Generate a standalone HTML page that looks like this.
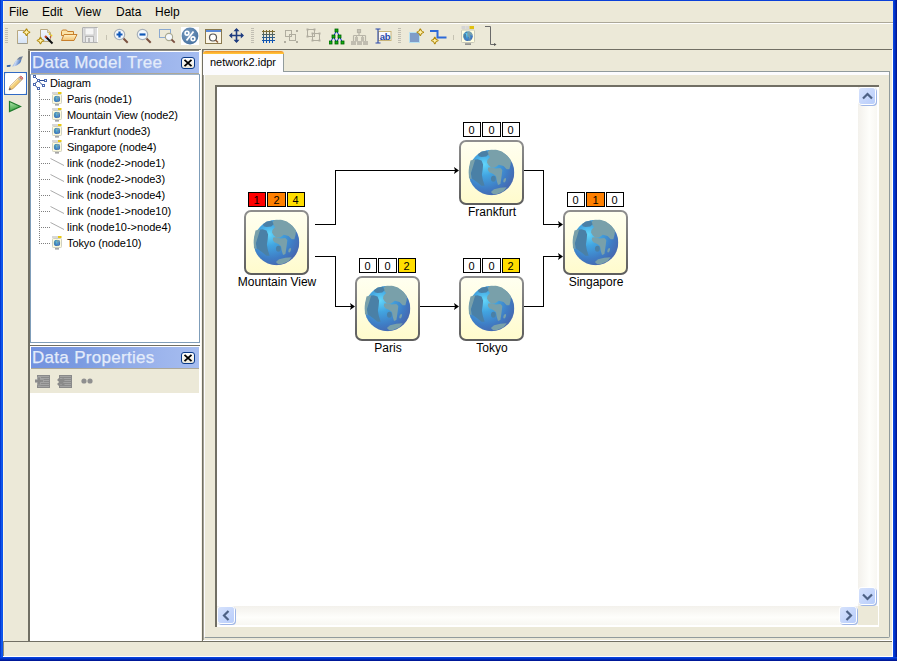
<!DOCTYPE html>
<html><head><meta charset="utf-8">
<style>
*{box-sizing:border-box;margin:0;padding:0}
html,body{width:897px;height:661px;overflow:hidden;background:#ece9d8;font-family:"Liberation Sans",sans-serif;position:relative}
.a{position:absolute}
.menu{font-size:12px;color:#000;top:5px;line-height:14px}
.title{font-size:17px;color:#e4ecfa;line-height:20px;white-space:nowrap;letter-spacing:0.3px;-webkit-text-stroke:0.25px #e4ecfa}
.tree{font-size:11px;color:#000;line-height:13px;white-space:nowrap;letter-spacing:-0.1px}
.lbl{font-size:12px;color:#000;line-height:14px;white-space:nowrap;text-align:center}
.bdg{font-size:11px;line-height:13px;padding-top:1px;padding-right:1px;text-align:center;border:1px solid #000;color:#000;background:#fff;height:15px;width:18px}
.node{width:64px;height:64px;border:2px solid #7d7d7d;border-radius:7px;background:linear-gradient(#fffff0,#fffde2 55%,#fff8cc)}
.node svg{position:absolute;left:6.5px;top:8px}
.closebtn{width:14px;height:12px;border:1px solid #0a3a88;border-radius:3px;background:linear-gradient(#fff,#ece8da)}
</style></head><body>
<svg width="0" height="0" style="position:absolute">
<defs>
<radialGradient id="gl" cx="0.36" cy="0.34" r="0.7" fx="0.34" fy="0.32">
<stop offset="0" stop-color="#62d6fa"/><stop offset="0.35" stop-color="#42a4e0"/><stop offset="0.75" stop-color="#3f7cc4"/><stop offset="1" stop-color="#4668b0"/>
</radialGradient>
<symbol id="globe" viewBox="0 0 46 46">
<circle cx="23" cy="23" r="22.8" fill="url(#gl)"/>
<path fill="#79a0aa" d="M18.9 2.8L20.9 0.4L27.1 0L33.4 2L38.9 6.3L42.5 11L42.1 14.9L40.9 19.7L38.2 19.7L35 16.5L30.3 15.3L27.9 16.9L26.4 18.1L22.4 17.7L20.1 15.7L18.5 13L18.9 10.6L21.6 7.5L20.1 5.9Z"/>
<path fill="#79a0aa" d="M19.7 18.1L23.2 17.7L27.1 18.9L31.9 18.5L33.8 20.5L33.4 24.4L32.6 29.9L31.9 34.6L29.5 35.4L28.3 31.5L27.5 26.8L24.8 24.4L20.9 22.8L19.3 20.5Z"/>
<ellipse cx="24.9" cy="29.3" rx="2.4" ry="3" fill="#4a80a6"/>
<path fill="#4a80a6" d="M5.9 10.2L9 9.8L13 11L14.6 14.9L14.2 19.7L13.4 25.2L14.2 29.9L16.1 36.2L13 36.2L9 33L3.5 29.1L2.4 24.4L3.1 18.9Z"/>
<path fill="#79a0aa" d="M2 11L6.7 9.8L4.7 16.5L2.4 23.6L3.1 29.9L0.4 28.3L0 20.5Z"/>
<path fill="#4a80a6" d="M9.4 4.7L13 2L18.5 1.2L20.1 4.7L17.7 7.1L13 7.5L10.2 6.7Z"/>
<path fill="#79a0aa" d="M22.4 42.5L25.5 39.7L31.9 38.2L38.2 37.8L35 41.7L28.7 44.5L24.8 44.8Z"/>
<ellipse cx="36.2" cy="30.7" rx="1.2" ry="2.4" transform="rotate(20 36.2 30.7)" fill="#79a0aa"/>
</symbol>
<symbol id="mini" viewBox="0 0 10 14">
<rect x="0" y="0" width="6" height="2" fill="#d8d8d8"/><rect x="6" y="0" width="3.5" height="2" fill="#e8c810"/>
<rect x="0.5" y="2.5" width="9" height="9" rx="0.8" fill="#fffbdc" stroke="#d0d0c0"/>
<use href="#globe" x="1.7" y="3.7" width="6.6" height="6.6"/>
<rect x="3" y="12.2" width="4" height="1.3" fill="#909090"/>
</symbol>
</defs>
</svg>

<!-- window border -->
<div class="a" style="left:0;top:0;width:897px;height:1px;background:#0a3fd8"></div>
<div class="a" style="left:0;top:0;width:3px;height:661px;background:linear-gradient(90deg,#0028c8,#1060f0 60%,#0a4ae8)"></div>
<div class="a" style="left:893px;top:0;width:4px;height:661px;background:linear-gradient(90deg,#0a48e8,#0030c0 50%,#00108a)"></div>
<div class="a" style="left:0;top:657px;width:897px;height:4px;background:linear-gradient(#0a48e8,#0030c0 50%,#00108a)"></div>
<div class="a" style="left:3px;top:1px;width:1px;height:656px;background:#fbf7e6"></div>

<!-- menu bar -->
<div class="a menu" style="left:9px">File</div>
<div class="a menu" style="left:42px">Edit</div>
<div class="a menu" style="left:75px">View</div>
<div class="a menu" style="left:116px">Data</div>
<div class="a menu" style="left:155px">Help</div>
<div class="a" style="left:3px;top:22px;width:890px;height:1px;background:#aca899"></div>
<div class="a" style="left:3px;top:23px;width:890px;height:1px;background:#fff"></div>

<!-- TOOLBAR -->
<div class="a" style="left:5px;top:28px;width:3px;height:16px;background:repeating-linear-gradient(#c1beb2 0 1px,transparent 1px 2px)"></div>
<!-- new -->
<svg class="a" style="left:16px;top:28px" width="16" height="17" viewBox="0 0 16 17">
<defs><linearGradient id="pgf" x1="0" y1="0" x2="0" y2="1"><stop offset="0" stop-color="#f4f7fc"/><stop offset="1" stop-color="#d6e4f6"/></linearGradient>
<path id="star" d="M0 -3.6Q0.7 -0.7 3.6 0Q0.7 0.7 0 3.6Q-0.7 0.7 -3.6 0Q-0.7 -0.7 0 -3.6Z" fill="#fff0a8" stroke="#b0880a" stroke-width="1.1"/></defs>
<path d="M1.5 2.5h7v2h3v11h-10z" fill="url(#pgf)" stroke="#b8a880"/>
<path d="M1.5 15.5h10" stroke="#9a9a90"/>
<use href="#star" x="10.5" y="4.3"/>
</svg>
<!-- wizard -->
<svg class="a" style="left:36px;top:28px" width="18" height="18" viewBox="0 0 18 18">
<path d="M4.5 1.5h7l3 3v9h-10z" fill="url(#pgf)" stroke="#b8a880"/>
<path d="M11.5 1.5v3h3" fill="#e8dcc0" stroke="#c8b888"/>
<path d="M9.5 8.5l7 7" stroke="#111" stroke-width="2"/>
<path d="M9 8l1.6 1.6" stroke="#d04020" stroke-width="2"/>
<circle cx="13.5" cy="6" r="0.9" fill="#f0d020"/><circle cx="15.5" cy="7.5" r="0.9" fill="#f0d020"/><circle cx="14.5" cy="9" r="0.8" fill="#c03020"/>
<use href="#star" x="4.5" y="12.5"/>
</svg>
<!-- open -->
<svg class="a" style="left:60px;top:29px" width="18" height="13" viewBox="0 0 18 13">
<defs><linearGradient id="fg" x1="0" y1="0" x2="0" y2="1"><stop offset="0" stop-color="#fff2c8"/><stop offset="1" stop-color="#f0c070"/></linearGradient></defs>
<path d="M1.5 2.5l1-1.5h4l1 1.5h6v4h-12z" fill="#fbe3a8" stroke="#c8802c"/>
<path d="M1.5 11.5l2.5-6h13l-3 6z" fill="url(#fg)" stroke="#c8802c"/>
</svg>
<!-- save -->
<svg class="a" style="left:82px;top:27px" width="16" height="16" viewBox="0 0 16 16">
<rect x="0.5" y="0.5" width="15" height="15" rx="0.5" fill="#dcdcdc" stroke="#b0b0b0"/>
<path d="M15.5 1v14" stroke="#fff"/>
<rect x="3" y="1" width="9" height="7" fill="#f6f6f6" stroke="#c4c4c4" stroke-width="0.8"/>
<rect x="3.5" y="9.5" width="8" height="6" fill="#ececec" stroke="#b4b4b4"/>
<rect x="6" y="11" width="2" height="4" fill="#bdbdbd"/>
</svg>
<div class="a" style="left:106px;top:35px;width:1px;height:5px;background:#c5c2b2"></div>
<!-- zoom in -->
<svg class="a" style="left:113px;top:28px" width="16" height="16" viewBox="0 0 16 16">
<circle cx="6.5" cy="6.5" r="5.2" fill="#f4f8fc" stroke="#a8b0b8" stroke-width="1.2"/>
<path d="M6.5 3.5v6M3.5 6.5h6" stroke="#1058b8" stroke-width="2.2"/>
<path d="M10.5 10.5l4.2 4.2" stroke="#7a5040" stroke-width="2"/>
</svg>
<!-- zoom out -->
<svg class="a" style="left:136px;top:28px" width="16" height="16" viewBox="0 0 16 16">
<circle cx="6.5" cy="6.5" r="5.2" fill="#f4f8fc" stroke="#a8b0b8" stroke-width="1.2"/>
<path d="M3.5 6.5h6" stroke="#1058b8" stroke-width="2.2"/>
<path d="M10.5 10.5l4.2 4.2" stroke="#7a5040" stroke-width="2"/>
</svg>
<!-- zoom rect -->
<svg class="a" style="left:159px;top:28px" width="17" height="16" viewBox="0 0 17 16">
<rect x="0.5" y="1.5" width="11" height="8" fill="none" stroke="#2a68c8" stroke-dasharray="1 1"/>
<circle cx="10" cy="9" r="3.6" fill="#f4f8fc" stroke="#a8a890" stroke-width="1.1"/>
<path d="M12.5 11.5l3.2 3.2" stroke="#7a5040" stroke-width="1.8"/>
</svg>
<!-- % -->
<svg class="a" style="left:181px;top:27px" width="18" height="18" viewBox="0 0 18 18">
<defs><radialGradient id="pcg" cx="0.4" cy="0.35" r="0.7"><stop offset="0" stop-color="#7a9cc0"/><stop offset="1" stop-color="#4672a0"/></radialGradient></defs>
<rect x="0" y="0" width="18" height="18" fill="#fff"/>
<circle cx="9" cy="9" r="8.4" fill="url(#pcg)"/>
<circle cx="6" cy="6.2" r="1.9" fill="none" stroke="#fff" stroke-width="1.6"/>
<circle cx="12" cy="11.8" r="1.9" fill="none" stroke="#fff" stroke-width="1.6"/>
<path d="M12.5 4.5l-7 9" stroke="#fff" stroke-width="1.8"/>
</svg>
<!-- window zoom -->
<svg class="a" style="left:205px;top:29px" width="17" height="15" viewBox="0 0 17 15">
<rect x="0.5" y="0.5" width="16" height="14" fill="#fbf6e8" stroke="#8a7a50"/>
<rect x="1" y="1" width="15" height="2" fill="#5888d8"/>
<circle cx="8" cy="8.5" r="3.5" fill="#fff" stroke="#555" stroke-width="1.2"/>
<path d="M10.5 11l2.5 2.5" stroke="#8a5a3a" stroke-width="1.5"/>
</svg>
<!-- move -->
<svg class="a" style="left:229px;top:28px" width="15" height="15" viewBox="0 0 15 15">
<path d="M7.5 1v13M1 7.5h13" stroke="#1e3c80" stroke-width="1.6"/>
<path d="M7.5 0l-3 3.2h6zM7.5 15l-3-3.2h6zM0 7.5l3.2-3v6zM15 7.5l-3.2-3v6z" fill="#1e3c80"/>
</svg>
<div class="a" style="left:251px;top:28px;width:3px;height:16px;background:repeating-linear-gradient(#c1beb2 0 1px,transparent 1px 2px)"></div>
<!-- grid -->
<svg class="a" style="left:262px;top:30px" width="13" height="13" viewBox="0 0 13 13">
<defs><linearGradient id="grg" x1="0" y1="0" x2="0" y2="1"><stop offset="0" stop-color="#907020"/><stop offset="0.5" stop-color="#386080"/><stop offset="1" stop-color="#0050c8"/></linearGradient></defs>
<path d="M1.5 0v13M4.5 0v13M7.5 0v13M10.5 0v13M0 1.5h13M0 4.5h13M0 7.5h13M0 10.5h13" stroke="url(#grg)" stroke-width="1"/>
</svg>
<!-- align disabled 1 -->
<svg class="a" style="left:284px;top:30px" width="14" height="13" viewBox="0 0 14 13">
<rect x="1.5" y="0.5" width="6" height="6" fill="none" stroke="#b0ad9f"/>
<rect x="5.5" y="4.5" width="6" height="6" fill="none" stroke="#b0ad9f"/>
<rect x="12" y="0" width="2" height="2" fill="#b0ad9f"/><rect x="0" y="11" width="2" height="2" fill="#b0ad9f"/><rect x="12" y="11" width="2" height="2" fill="#b0ad9f"/>
</svg>
<svg class="a" style="left:306px;top:28px" width="15" height="15" viewBox="0 0 15 15">
<g fill="none" stroke="#b0ad9f"><rect x="1.5" y="1.5" width="7" height="7"/><rect x="6.5" y="5.5" width="7" height="7"/></g>
<g fill="#b0ad9f"><rect x="0.5" y="0.5" width="2" height="2"/><rect x="7.5" y="0.5" width="2" height="2"/><rect x="0.5" y="7.5" width="2" height="2"/>
<rect x="5.5" y="4.5" width="2" height="2"/><rect x="12.5" y="4.5" width="2" height="2"/><rect x="5.5" y="11.5" width="2" height="2"/><rect x="12.5" y="11.5" width="2" height="2"/></g>
</svg>
<!-- tree layout -->
<svg class="a" style="left:329px;top:28px" width="16" height="17" viewBox="0 0 16 17">
<path d="M7.5 2.5L4.5 8.5L1.5 14.5M4.5 8.5L7.5 14.5M7.5 2.5L10.5 8.5L13.5 14.5M10.5 8.5L7.5 14.5" stroke="#1030e0" stroke-width="1" fill="none"/>
<g fill="#10b010" stroke="#006000" stroke-width="0.8">
<rect x="6" y="1" width="3" height="3"/>
<rect x="3" y="7" width="3" height="3"/>
<rect x="9" y="7" width="3" height="3"/>
<rect x="0" y="13" width="3" height="3"/>
<rect x="6" y="13" width="3" height="3"/>
<rect x="12" y="13" width="3" height="3"/>
</g>
</svg>
<!-- gray tree -->
<svg class="a" style="left:351px;top:29px" width="17" height="16" viewBox="0 0 17 16">
<g stroke="#b8b5a8" fill="none" stroke-width="1.2">
<rect x="6.5" y="0.5" width="3" height="3" fill="#c8c5b8"/>
<path d="M8 3.5v3M2.5 6.5h12M2.5 6.5v6M14.5 6.5v6M5.5 6.5v6M11.5 6.5v6"/>
</g>
<g fill="#c0bdb0"><rect x="0" y="12" width="5" height="4"/><rect x="12" y="12" width="5" height="4"/><rect x="6" y="12" width="5" height="4"/>
<rect x="4" y="8" width="3" height="4"/><rect x="10" y="8" width="3" height="4"/></g>
</svg>
<!-- [ab] -->
<svg class="a" style="left:375px;top:28px" width="17" height="16" viewBox="0 0 17 16">
<rect x="3.5" y="3.5" width="12.5" height="9" fill="#f8f8ff" stroke="#c8b478"/>
<path d="M0.5 1h5M3 1v14M0.5 15h5" stroke="#2848a8" stroke-width="1.1"/>
<text x="10" y="11.6" font-family="Liberation Sans" font-weight="bold" font-size="9.5" fill="#2848a8" text-anchor="middle" letter-spacing="-0.3">ab</text>
</svg>
<div class="a" style="left:398px;top:28px;width:3px;height:16px;background:repeating-linear-gradient(#c1beb2 0 1px,transparent 1px 2px)"></div>
<!-- new node -->
<svg class="a" style="left:409px;top:28px" width="16" height="15" viewBox="0 0 16 15">
<path d="M0.5 4.5h10v10h-10z" fill="#7f9cc8" stroke="#b8e0f0"/>
<use href="#star" x="11.3" y="4.3"/>
</svg>
<!-- new link -->
<svg class="a" style="left:430px;top:28px" width="17" height="17" viewBox="0 0 17 17">
<path d="M0 3h7.5v6.5h9" stroke="#2d6ad8" stroke-width="2" fill="none"/>
<use href="#star" x="4.8" y="12.5"/>
</svg>
<div class="a" style="left:453px;top:35px;width:1px;height:5px;background:#c5c2b2"></div>
<!-- node icon -->
<svg class="a" style="left:461px;top:25px" width="14" height="21" viewBox="0 0 14 21">
<rect x="0.5" y="1" width="4" height="3" fill="#d4d4d4"/><rect x="5" y="1" width="3.5" height="3" fill="#d8d8d8"/><rect x="8.5" y="1" width="4.5" height="3" fill="#e0c010"/>
<rect x="0.5" y="5" width="13" height="12.5" rx="1" fill="#fffde0" stroke="#c8c8b8"/>
<use href="#globe" x="2.1" y="6.3" width="9.8" height="9.8"/>
<rect x="4" y="18.3" width="6" height="1.6" fill="#888"/>
</svg>
<!-- link L -->
<svg class="a" style="left:484px;top:25px" width="14" height="22" viewBox="0 0 14 22">
<path d="M1 1.5h5.5v18h5" stroke="#6a6a6a" stroke-width="1" fill="none"/>
<path d="M10 18l2.5 1.5-2.5 1.5z" fill="#555"/>
</svg>



<!-- left vertical toolbar -->
<svg class="a" style="left:6px;top:55px" width="18" height="13" viewBox="0 0 18 13">
<defs><linearGradient id="qg" x1="0" y1="0" x2="1" y2="0.3"><stop offset="0" stop-color="#3a68b0"/><stop offset="0.45" stop-color="#c8d8f4"/><stop offset="1" stop-color="#3a6ab8"/></linearGradient></defs>
<path d="M0.8 10.2L4.8 9.8L4.2 11.8L0.9 12z" fill="#2f5fa8"/>
<path d="M6.2 11.6C8 9.5 8.6 6.8 10.8 4.6L15.3 5C15 8 12 10.8 6.2 11.6Z" fill="url(#qg)"/>
<path d="M10.8 4.6L13.5 2L17 1.3L15.8 3.6L15.3 5Z" fill="#6f7f98"/>
</svg>
<div class="a" style="left:4px;top:72px;width:23px;height:23px;border:1px solid #316ac5;background:#dce6dc"></div><div class="a" style="left:5px;top:73px;width:21px;height:21px;border-radius:3px;background:#fff"></div>
<svg class="a" style="left:7px;top:75px" width="17" height="17" viewBox="0 0 17 17">
<path d="M2 15l1.2-3.8 9-9 2.6 2.6-9 9z" fill="#f3cf7a" stroke="#c08a40" stroke-width="0.8"/>
<path d="M3.6 11.6l8.8-8.8" stroke="#fff4d0" stroke-width="0.9"/>
<path d="M2 15l0.7-2.3 1.6 1.6z" fill="#3a4a80"/>
<path d="M11.2 3.2l2.6 2.6" stroke="#b8b8b8" stroke-width="1.6"/>
<path d="M12.6 1.8l2.6 2.6 0.8-1.4-2-2z" fill="#e89090" stroke="#c05050" stroke-width="0.7"/>
</svg>
<svg class="a" style="left:8px;top:100px" width="14" height="13" viewBox="0 0 14 13">
<defs><linearGradient id="pg" x1="0" y1="0" x2="0.3" y2="1"><stop offset="0" stop-color="#b8e8b0"/><stop offset="1" stop-color="#38a040"/></linearGradient></defs>
<path d="M1.5 1.5L12.5 6.5 1.5 11.5z" fill="url(#pg)" stroke="#1f7a2a" stroke-width="1.2" stroke-linejoin="miter"/>
</svg>


<!-- LEFT DOCK -->
<div class="a" style="left:28px;top:49px;width:173px;height:592px;background:#fff"></div>
<div class="a" style="left:201px;top:49px;width:1px;height:592px;background:#f6f3e6"></div>
<div class="a" style="left:28px;top:49px;width:2px;height:592px;background:#716f64"></div>
<div class="a" style="left:28px;top:49px;width:173px;height:1px;background:#716f64"></div>
<div class="a" style="left:28px;top:50px;width:171px;height:1px;background:#8e8c80"></div>
<div class="a" style="left:199px;top:51px;width:2px;height:590px;background:#fff"></div>
<!-- tree title -->
<div class="a" style="left:31px;top:52px;width:168px;height:21px;background:linear-gradient(90deg,#7392df,#7b9be1 30%,#9cb4ec 75%,#a6bdf0)"></div>
<div class="a title" style="left:32px;top:53px">Data Model Tree</div>
<div class="a closebtn" style="left:181px;top:57px"></div>
<svg class="a" style="left:183px;top:59px" width="10" height="8" viewBox="0 0 10 8"><path d="M1.5 0.8l7 6.4M8.5 0.8l-7 6.4" stroke="#000" stroke-width="1.8"/></svg>
<div class="a" style="left:31px;top:73px;width:168px;height:1px;background:#aca899"></div>
<!-- tree content border -->
<div class="a" style="left:30px;top:74px;width:170px;height:269px;border:1px solid #7f9db9;border-top-color:#9fb5cc;background:#fff"></div>
<!-- diagram icon -->
<svg class="a" style="left:32px;top:74px" width="17" height="17" viewBox="0 0 17 17">
<path d="M3.5 3.5L6 6M7.5 6.5H13M5.5 7.5L3 9.5M7 7.5L10.5 11M3.5 12L6 14" stroke="#2a4a90" stroke-width="1" fill="none"/>
<rect x="1.5" y="1.5" width="2" height="2" fill="#fff" stroke="#4a68b0"/>
<rect x="5.5" y="5.5" width="2" height="2" fill="#fff" stroke="#4a68b0"/>
<rect x="12.5" y="5.5" width="2" height="2" fill="#fff" stroke="#4a68b0"/>
<rect x="1.5" y="9.5" width="2" height="2" fill="#fff" stroke="#4a68b0"/>
<rect x="10.5" y="10.5" width="2" height="2" fill="#fff" stroke="#4a68b0"/>
<rect x="5.5" y="13.5" width="2" height="2" fill="#fff" stroke="#4a68b0"/>
</svg>
<div class="a tree" style="left:50px;top:77px">Diagram</div>
<!-- dotted vertical -->
<div class="a" style="left:39px;top:91px;width:1px;height:153px;background:repeating-linear-gradient(#7f7f7f 0 1px,transparent 1px 2px)"></div>
<div class="a" style="left:41px;top:99px;width:9px;height:1px;background:repeating-linear-gradient(90deg,#7f7f7f 0 1px,transparent 1px 2px)"></div>
<svg class="a" style="left:52px;top:92px" width="10" height="14"><use href="#mini"/></svg>
<div class="a tree" style="left:67px;top:93px">Paris (node1)</div>
<div class="a" style="left:41px;top:115px;width:9px;height:1px;background:repeating-linear-gradient(90deg,#7f7f7f 0 1px,transparent 1px 2px)"></div>
<svg class="a" style="left:52px;top:108px" width="10" height="14"><use href="#mini"/></svg>
<div class="a tree" style="left:67px;top:109px">Mountain View (node2)</div>
<div class="a" style="left:41px;top:131px;width:9px;height:1px;background:repeating-linear-gradient(90deg,#7f7f7f 0 1px,transparent 1px 2px)"></div>
<svg class="a" style="left:52px;top:124px" width="10" height="14"><use href="#mini"/></svg>
<div class="a tree" style="left:67px;top:125px">Frankfurt (node3)</div>
<div class="a" style="left:41px;top:147px;width:9px;height:1px;background:repeating-linear-gradient(90deg,#7f7f7f 0 1px,transparent 1px 2px)"></div>
<svg class="a" style="left:52px;top:140px" width="10" height="14"><use href="#mini"/></svg>
<div class="a tree" style="left:67px;top:141px">Singapore (node4)</div>
<div class="a" style="left:41px;top:163px;width:9px;height:1px;background:repeating-linear-gradient(90deg,#7f7f7f 0 1px,transparent 1px 2px)"></div>
<svg class="a" style="left:50px;top:158px" width="15" height="9" viewBox="0 0 15 9"><path d="M0.5 0.5L14 7.5" stroke="#a0a0a0" stroke-width="0.9"/></svg>
<div class="a tree" style="left:67px;top:157px;letter-spacing:0">link (node2-&gt;node1)</div>
<div class="a" style="left:41px;top:179px;width:9px;height:1px;background:repeating-linear-gradient(90deg,#7f7f7f 0 1px,transparent 1px 2px)"></div>
<svg class="a" style="left:50px;top:174px" width="15" height="9" viewBox="0 0 15 9"><path d="M0.5 0.5L14 7.5" stroke="#a0a0a0" stroke-width="0.9"/></svg>
<div class="a tree" style="left:67px;top:173px;letter-spacing:0">link (node2-&gt;node3)</div>
<div class="a" style="left:41px;top:195px;width:9px;height:1px;background:repeating-linear-gradient(90deg,#7f7f7f 0 1px,transparent 1px 2px)"></div>
<svg class="a" style="left:50px;top:190px" width="15" height="9" viewBox="0 0 15 9"><path d="M0.5 0.5L14 7.5" stroke="#a0a0a0" stroke-width="0.9"/></svg>
<div class="a tree" style="left:67px;top:189px;letter-spacing:0">link (node3-&gt;node4)</div>
<div class="a" style="left:41px;top:211px;width:9px;height:1px;background:repeating-linear-gradient(90deg,#7f7f7f 0 1px,transparent 1px 2px)"></div>
<svg class="a" style="left:50px;top:206px" width="15" height="9" viewBox="0 0 15 9"><path d="M0.5 0.5L14 7.5" stroke="#a0a0a0" stroke-width="0.9"/></svg>
<div class="a tree" style="left:67px;top:205px;letter-spacing:0">link (node1-&gt;node10)</div>
<div class="a" style="left:41px;top:227px;width:9px;height:1px;background:repeating-linear-gradient(90deg,#7f7f7f 0 1px,transparent 1px 2px)"></div>
<svg class="a" style="left:50px;top:222px" width="15" height="9" viewBox="0 0 15 9"><path d="M0.5 0.5L14 7.5" stroke="#a0a0a0" stroke-width="0.9"/></svg>
<div class="a tree" style="left:67px;top:221px;letter-spacing:0">link (node10-&gt;node4)</div>
<div class="a" style="left:41px;top:243px;width:9px;height:1px;background:repeating-linear-gradient(90deg,#7f7f7f 0 1px,transparent 1px 2px)"></div>
<svg class="a" style="left:52px;top:236px" width="10" height="14"><use href="#mini"/></svg>
<div class="a tree" style="left:67px;top:237px">Tokyo (node10)</div>

<!-- properties -->
<div class="a" style="left:30px;top:343px;width:170px;height:2px;background:#fff"></div>
<div class="a" style="left:28px;top:345px;width:172px;height:1px;background:#716f64"></div>
<div class="a" style="left:31px;top:347px;width:168px;height:21px;background:linear-gradient(90deg,#7392df,#7b9be1 30%,#9cb4ec 75%,#a6bdf0)"></div>
<div class="a title" style="left:32px;top:348px">Data Properties</div>
<div class="a closebtn" style="left:181px;top:352px"></div>
<svg class="a" style="left:183px;top:354px" width="10" height="8" viewBox="0 0 10 8"><path d="M1.5 0.8l7 6.4M8.5 0.8l-7 6.4" stroke="#000" stroke-width="1.8"/></svg>
<div class="a" style="left:31px;top:368px;width:168px;height:1px;background:#aca899"></div>
<div class="a" style="left:30px;top:369px;width:169px;height:24px;background:#ece9d8"></div>
<svg class="a" style="left:35px;top:375px" width="15" height="13" viewBox="0 0 15 13">
<rect x="2" y="0" width="13" height="13" fill="#8a8a8a"/>
<path d="M3 1.5h11M3 3.5h11M3 5.5h11M3 7.5h11M3 9.5h11M3 11.5h11" stroke="#a4a4a4" stroke-width="1"/>
<path d="M2.5 3.5h3v3h3v3h-3v3h-3v-3h-3v-3h3z" fill="#8a8a8a" stroke="#a8a8a8" stroke-width="0.8" transform="translate(0,-1.2) scale(1,0.9)"/>
</svg>
<svg class="a" style="left:57px;top:375px" width="15" height="13" viewBox="0 0 15 13">
<rect x="2" y="0" width="13" height="13" fill="#8a8a8a"/>
<path d="M3 1.5h11M3 3.5h11M3 5.5h11M3 7.5h11M3 9.5h11M3 11.5h11" stroke="#a4a4a4" stroke-width="1"/>
<path d="M1 4l6 6M7 4l-6 6" stroke="#8a8a8a" stroke-width="2.6"/>
</svg>
<svg class="a" style="left:81px;top:378px" width="12" height="6" viewBox="0 0 12 6">
<circle cx="3" cy="3" r="2.6" fill="#8f8f8f"/><circle cx="9" cy="3" r="2.6" fill="#8f8f8f"/>
</svg>


<!-- EDITOR -->
<div class="a" style="left:202px;top:49px;width:691px;height:592px;background:#ece9d8"></div>
<div class="a" style="left:202px;top:49px;width:1px;height:592px;background:#716f64"></div>
<div class="a" style="left:203px;top:50px;width:1px;height:590px;background:#a3a194"></div>
<div class="a" style="left:202px;top:49px;width:690px;height:1px;background:#716f64"></div>
<div class="a" style="left:203px;top:640px;width:690px;height:1px;background:#fff"></div>
<div class="a" style="left:892px;top:49px;width:1px;height:592px;background:#fff"></div>
<!-- tab content panel -->
<div class="a" style="left:204px;top:71px;width:686px;height:567px;border:1px solid #919b9c;border-left-color:#fcfcfe;border-radius:0 0 2px 0;background:#fcfcfe"></div>
<div class="a" style="left:205px;top:75px;width:684px;height:562px;background:#ece9d8"></div>
<!-- tab -->
<div class="a" style="left:203px;top:51px;width:81px;height:24px;background:#fcfcfe;border-radius:3px 3px 0 0"></div>
<div class="a" style="left:283px;top:53px;width:1px;height:19px;background:#919b9c"></div>
<div class="a" style="left:203px;top:51px;width:81px;height:3px;background:linear-gradient(#e68b2c,#ffb732 60%,#ffc83c);border-radius:3px 3px 0 0"></div>
<div class="a tree" style="left:210px;top:56px;letter-spacing:0">network2.idpr</div>
<!-- scroll pane -->
<div class="a" style="left:215px;top:85px;width:664px;height:542px;background:#fff"></div>
<div class="a" style="left:215px;top:85px;width:664px;height:2px;background:#716f64"></div>
<div class="a" style="left:215px;top:85px;width:2px;height:542px;background:#716f64"></div>
<!-- canvas -->
<div class="a" style="left:217px;top:87px;width:642px;height:519px;background:#fff"></div>
<!-- vscroll -->
<div class="a" style="left:858px;top:87px;width:19px;height:519px;background:linear-gradient(90deg,#f3f1ec,#fefefb 60%,#f8f7f2)"></div>
<div class="a" style="left:859px;top:88px;width:16px;height:16px;border-radius:3px;background:linear-gradient(135deg,#d6e2fc,#b8cdfb);box-shadow:0 0 0 1px #fff, 1px 1px 0 1px #9fb6e6"></div>
<svg class="a" style="left:862px;top:92px" width="11" height="8" viewBox="0 0 11 8"><path d="M1 6.5l4.5-4.5 4.5 4.5" stroke="#4d6185" stroke-width="2.2" fill="none"/></svg>
<div class="a" style="left:859px;top:588px;width:16px;height:16px;border-radius:3px;background:linear-gradient(135deg,#d6e2fc,#b8cdfb);box-shadow:0 0 0 1px #fff, 1px 1px 0 1px #9fb6e6"></div>
<svg class="a" style="left:862px;top:593px" width="11" height="8" viewBox="0 0 11 8"><path d="M1 1.5l4.5 4.5 4.5-4.5" stroke="#4d6185" stroke-width="2.2" fill="none"/></svg>
<!-- hscroll -->
<div class="a" style="left:217px;top:606px;width:641px;height:19px;background:linear-gradient(#f3f1ec,#fefefb 60%,#f8f7f2)"></div>
<div class="a" style="left:218px;top:607px;width:16px;height:16px;border-radius:3px;background:linear-gradient(135deg,#d6e2fc,#b8cdfb);box-shadow:0 0 0 1px #fff, 1px 1px 0 1px #9fb6e6"></div>
<svg class="a" style="left:222px;top:610px" width="8" height="11" viewBox="0 0 8 11"><path d="M6.5 1l-4.5 4.5 4.5 4.5" stroke="#4d6185" stroke-width="2.2" fill="none"/></svg>
<div class="a" style="left:840px;top:607px;width:16px;height:16px;border-radius:3px;background:linear-gradient(135deg,#d6e2fc,#b8cdfb);box-shadow:0 0 0 1px #fff, 1px 1px 0 1px #9fb6e6"></div>
<svg class="a" style="left:845px;top:610px" width="8" height="11" viewBox="0 0 8 11"><path d="M1.5 1l4.5 4.5-4.5 4.5" stroke="#4d6185" stroke-width="2.2" fill="none"/></svg>
<div class="a" style="left:877px;top:606px;width:1px;height:19px;background:#ece9d8"></div>
<div class="a" style="left:858px;top:606px;width:19px;height:19px;background:#ece9d8"></div>

<!-- DIAGRAM -->
<svg class="a" style="left:0;top:0" width="897" height="661" viewBox="0 0 897 661">
<defs>
<linearGradient id="nbs" x1="0" y1="0" x2="0" y2="1"><stop offset="0" stop-color="#8e8e8e"/><stop offset="1" stop-color="#5e5e5e"/></linearGradient>
<linearGradient id="nbf" x1="0" y1="0" x2="0" y2="1"><stop offset="0" stop-color="#fffff0"/><stop offset="0.5" stop-color="#fffde0"/><stop offset="1" stop-color="#fffbcc"/></linearGradient>
</defs>
<g stroke="#000" stroke-width="1" fill="none" shape-rendering="crispEdges">
<path d="M315 224.5H335.5V170.5H455"/>
<path d="M315 256.5H335.5V306.5H351"/>
<path d="M419 306.5H455"/>
<path d="M524 170.5H543.5V224.5H559"/>
<path d="M524 306.5H543.5V256.5H559"/>
</g>
<g fill="#000">
<path d="M459 170.5l-5-3.5 1 3.5-1 3.5z"/>
<path d="M355 306.5l-5-3.5 1 3.5-1 3.5z"/>
<path d="M459 306.5l-5-3.5 1 3.5-1 3.5z"/>
<path d="M563 224.5l-5-3.5 1 3.5-1 3.5z"/>
<path d="M563 256.5l-5-3.5 1 3.5-1 3.5z"/>
</g>
<rect x="245" y="211" width="63" height="63" rx="6" fill="url(#nbf)" stroke="url(#nbs)" stroke-width="2"/>
<svg x="253.5" y="219.5" width="46" height="46" viewBox="0 0 46 46"><use href="#globe"/></svg>
<rect x="460" y="141" width="63" height="63" rx="6" fill="url(#nbf)" stroke="url(#nbs)" stroke-width="2"/>
<svg x="468.5" y="149.5" width="46" height="46" viewBox="0 0 46 46"><use href="#globe"/></svg>
<rect x="564" y="211" width="63" height="63" rx="6" fill="url(#nbf)" stroke="url(#nbs)" stroke-width="2"/>
<svg x="572.5" y="219.5" width="46" height="46" viewBox="0 0 46 46"><use href="#globe"/></svg>
<rect x="356" y="277" width="63" height="63" rx="6" fill="url(#nbf)" stroke="url(#nbs)" stroke-width="2"/>
<svg x="364.5" y="285.5" width="46" height="46" viewBox="0 0 46 46"><use href="#globe"/></svg>
<rect x="460" y="277" width="63" height="63" rx="6" fill="url(#nbf)" stroke="url(#nbs)" stroke-width="2"/>
<svg x="468.5" y="285.5" width="46" height="46" viewBox="0 0 46 46"><use href="#globe"/></svg>
</svg>
<div class="a bdg" style="left:248px;width:18px;padding-right:1px;top:192px;background:#ff0000">1</div>
<div class="a bdg" style="left:267px;width:19px;padding-right:0px;top:192px;background:#ff8000">2</div>
<div class="a bdg" style="left:287px;width:18px;padding-right:1px;top:192px;background:#ffdd00">4</div>
<div class="a lbl" style="left:207px;width:140px;top:275px">Mountain View</div>
<div class="a bdg" style="left:463px;width:18px;padding-right:1px;top:122px;background:#fff">0</div>
<div class="a bdg" style="left:482px;width:19px;padding-right:0px;top:122px;background:#fff">0</div>
<div class="a bdg" style="left:502px;width:18px;padding-right:1px;top:122px;background:#fff">0</div>
<div class="a lbl" style="left:422px;width:140px;top:205px">Frankfurt</div>
<div class="a bdg" style="left:567px;width:18px;padding-right:1px;top:192px;background:#fff">0</div>
<div class="a bdg" style="left:586px;width:19px;padding-right:0px;top:192px;background:#ff8000">1</div>
<div class="a bdg" style="left:606px;width:18px;padding-right:1px;top:192px;background:#fff">0</div>
<div class="a lbl" style="left:526px;width:140px;top:275px">Singapore</div>
<div class="a bdg" style="left:359px;width:18px;padding-right:1px;top:258px;background:#fff">0</div>
<div class="a bdg" style="left:378px;width:19px;padding-right:0px;top:258px;background:#fff">0</div>
<div class="a bdg" style="left:398px;width:18px;padding-right:1px;top:258px;background:#ffdd00">2</div>
<div class="a lbl" style="left:318px;width:140px;top:341px">Paris</div>
<div class="a bdg" style="left:463px;width:18px;padding-right:1px;top:258px;background:#fff">0</div>
<div class="a bdg" style="left:482px;width:19px;padding-right:0px;top:258px;background:#fff">0</div>
<div class="a bdg" style="left:502px;width:18px;padding-right:1px;top:258px;background:#ffdd00">2</div>
<div class="a lbl" style="left:422px;width:140px;top:341px">Tokyo</div>

<!-- status bar -->
<div class="a" style="left:3px;top:641px;width:890px;height:1px;background:#716f64"></div>
<div class="a" style="left:3px;top:641px;width:1px;height:16px;background:#8c8a7c"></div>
<div class="a" style="left:3px;top:656px;width:890px;height:1px;background:#fff"></div>
<div class="a" style="left:892px;top:641px;width:1px;height:16px;background:#fff"></div>

</body></html>
